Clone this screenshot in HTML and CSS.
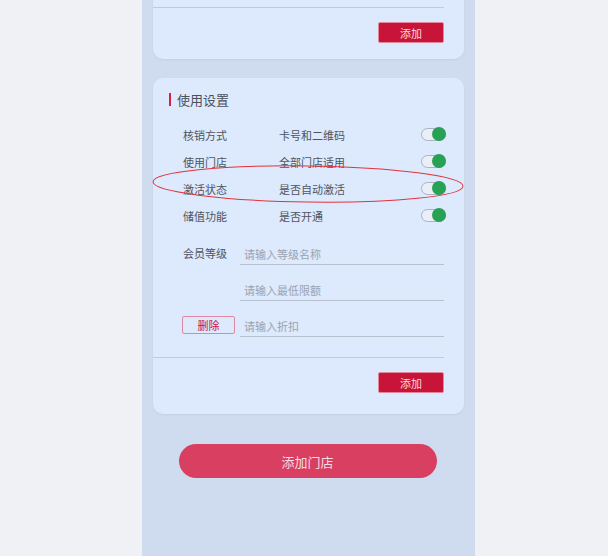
FILE: index.html
```html
<!DOCTYPE html>
<html lang="zh-CN">
<head>
  <meta charset="UTF-8" />
  <meta name="viewport" content="width=device-width, initial-scale=1.0" />
  <title>会员卡设置</title>
  <link rel="stylesheet" href="styles.css">
</head>
<body>
  <div class="phone">
    <div class="card card-top">
      <div class="divider"></div>
      <div class="card-foot">
        <button class="add-btn">添加</button>
      </div>
    </div>

    <div class="card card-settings">
      <div class="card-title">使用设置</div>

      <div class="rows">
        <div class="row">
          <span class="row-label">核销方式</span>
          <span class="row-value">卡号和二维码</span>
          <span class="switch on"></span>
        </div>
        <div class="row">
          <span class="row-label">使用门店</span>
          <span class="row-value">全部门店适用</span>
          <span class="switch on"></span>
        </div>
        <div class="row">
          <span class="row-label">激活状态</span>
          <span class="row-value">是否自动激活</span>
          <span class="switch on"></span>
        </div>
        <div class="row">
          <span class="row-label">储值功能</span>
          <span class="row-value">是否开通</span>
          <span class="switch on"></span>
        </div>
      </div>

      <div class="levels">
        <div class="level-row">
          <span class="level-label">会员等级</span>
          <input class="level-input" type="text" placeholder="请输入等级名称" />
        </div>
        <div class="level-row">
          <span class="level-label"></span>
          <input class="level-input" type="text" placeholder="请输入最低限额" />
        </div>
        <div class="level-row">
          <span class="level-label"><button class="del-btn">删除</button></span>
          <input class="level-input" type="text" placeholder="请输入折扣" />
        </div>
      </div>

      <div class="divider"></div>
      <div class="card-foot">
        <button class="add-btn">添加</button>
      </div>
    </div>

    <div class="bottom-bar">
      <button class="store-btn">添加门店</button>
    </div>
  </div>

  <!-- annotation ring around the activation row -->
  <svg class="mark" width="608" height="556" viewBox="0 0 608 556">
    <ellipse cx="308" cy="184" rx="155" ry="18" transform="rotate(0.8 308 184)" />
  </svg>
</body>
</html>
```

FILE: styles.css
```css
body {
  margin: 0;
  font-family: "Noto Sans CJK SC", "Noto Sans", sans-serif;
  background-color: #eff1f5;
  color: #4f5561;
  overflow: hidden;
}
.phone {
  width: 333px;
  margin-left: 142px;
  min-height: 556px;
  background-color: #cfdcf0;
  display: flex;
  flex-direction: column;
}
.card {
  background-color: #dde9fc;
  margin: 0 11px;
  border-radius: 10px;
  box-shadow: 0 1px 2px rgba(120, 140, 170, 0.15);
}
.card-top {
  margin-top: -20px;
  padding-top: 27px;
  padding-bottom: 16px;
}
.card-settings {
  margin-top: 19px;
  padding-top: 13px;
  padding-bottom: 21px;
}
.divider {
  height: 1px;
  background-color: #bfcadb;
  margin-right: 20px;
}
.card-foot {
  display: flex;
  justify-content: flex-end;
  padding: 14px 20px 0 0;
}
.add-btn {
  width: 66px;
  height: 21px;
  border: 1px solid #e4869c;
  border-radius: 2px;
  background-color: #c9143a;
  color: #f6dde3;
  font-family: inherit;
  font-size: 11px;
  padding: 0;
  cursor: pointer;
}
.card-title {
  display: flex;
  align-items: center;
  gap: 6px;
  margin-left: 16px;
  height: 16px;
  font-size: 13px;
  color: #4a505c;
}
.card-title::before {
  content: "";
  width: 2px;
  height: 13px;
  background-color: #d8203f;
}
.rows {
  margin-top: 14px;
  padding: 0 18px 0 30px;
}
.row {
  display: flex;
  align-items: center;
  height: 27px;
  font-size: 11px;
}
.row-label {
  width: 96px;
}
.row-value {
  flex: 1;
}
.switch {
  position: relative;
  width: 23px;
  height: 11px;
  border: 1px solid #aab3c2;
  border-radius: 7px;
  background-color: #e9eef7;
}
.switch.on::after {
  content: "";
  position: absolute;
  right: -1px;
  top: -2px;
  width: 14px;
  height: 14px;
  border-radius: 50%;
  background-color: #27a153;
}
.levels {
  margin-top: 11px;
  padding: 0 20px 0 29px;
  display: flex;
  flex-direction: column;
  gap: 11px;
  margin-bottom: 20px;
}
.level-row {
  display: flex;
  align-items: center;
}
.level-label {
  width: 57px;
  flex-shrink: 0;
  font-size: 11px;
  padding-left: 1px;
}
.level-input {
  flex: 1;
  min-width: 0;
  height: 16px;
  padding: 6px 4px 2px;
  border: none;
  border-bottom: 1px solid #b6c0cf;
  background: transparent;
  font-family: inherit;
  font-size: 11px;
  line-height: 16px;
  color: #4f5561;
  outline: none;
}
.level-input::placeholder {
  color: #9ba3b0;
}
.del-btn {
  width: 53px;
  height: 18px;
  padding: 0;
  border: 1px solid #dd8aa0;
  border-radius: 2px;
  background: transparent;
  color: #c9143a;
  font-family: inherit;
  font-size: 11px;
  margin-left: -1px;
}
.bottom-bar {
  display: flex;
  justify-content: center;
  margin-top: 30px;
}
.store-btn {
  width: 258px;
  height: 34px;
  border: none;
  border-radius: 17px;
  background-color: #d83f60;
  color: #f7dfe5;
  font-family: inherit;
  font-size: 13px;
  margin-right: 2px;
  cursor: pointer;
}
.mark {
  position: absolute;
  left: 0;
  top: 0;
  pointer-events: none;
}
.mark ellipse {
  fill: none;
  stroke: #e2343c;
  stroke-width: 1;
}
```
